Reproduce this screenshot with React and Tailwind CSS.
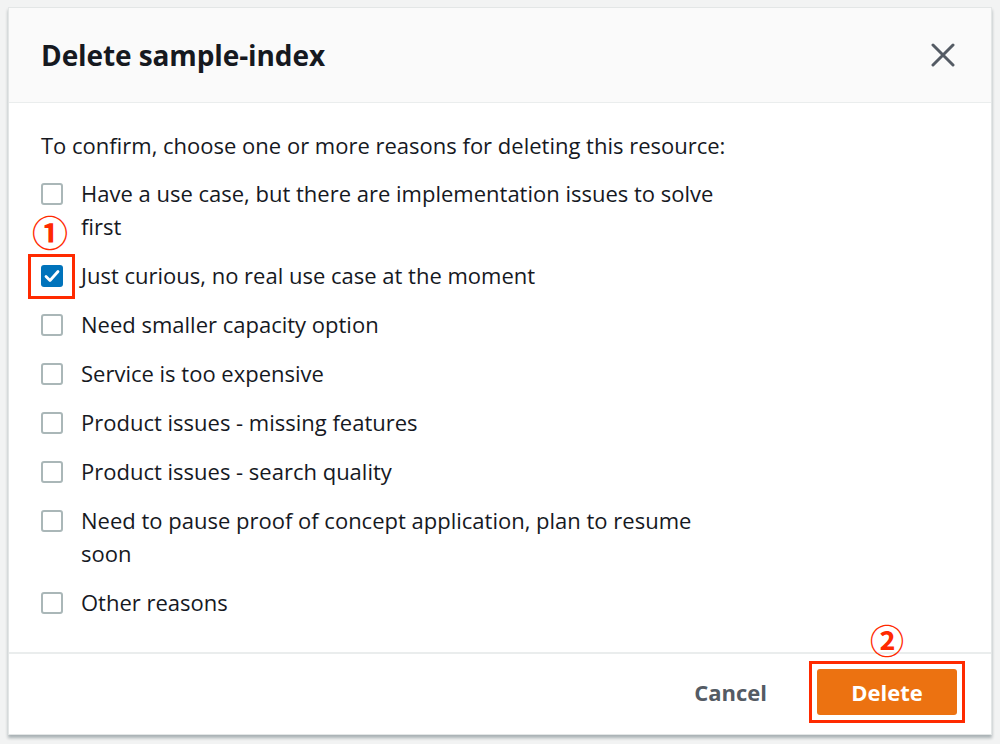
export default function App() {
  const reasons = [
    { text: "Have a use case, but there are implementation issues to solve first", checked: false },
    { text: "Just curious, no real use case at the moment", checked: true },
    { text: "Need smaller capacity option", checked: false },
    { text: "Service is too expensive", checked: false },
    { text: "Product issues - missing features", checked: false },
    { text: "Product issues - search quality", checked: false },
    { text: "Need to pause proof of concept application, plan to resume soon", checked: false },
    { text: "Other reasons", checked: false },
  ];
  return (
    <div
      className="w-[1000px] h-[744px] bg-[#f2f3f3] pt-[7px] pl-[8px] overflow-hidden"
      style={{ fontFamily: '"Open Sans", "Noto Sans", sans-serif' }}
    >
      <div className="w-[984px] h-[728px] bg-white flex flex-col border border-[#e3e6e6] shadow-[0_3px_3px_rgba(0,28,36,0.3)]">
        <div className="h-[95px] shrink-0 bg-[#fafafa] border-b border-[#eaeded] flex items-center justify-between pl-[32px] pr-[36px]">
          <h1 className="text-[28px] font-bold text-[#16191f] tracking-[-0.1px]">Delete sample-index</h1>
          <svg width="24" height="24" viewBox="0 0 24 24" className="text-[#545b64]">
            <path d="M2 2 L22 22 M22 2 L2 22" stroke="currentColor" strokeWidth="3" strokeLinecap="round" />
          </svg>
        </div>
        <div className="flex-1 pl-[32px] pt-[26px] text-[#16191f] text-[22px] leading-[33px]">
          <p className="mb-[15px]">To confirm, choose one or more reasons for deleting this resource:</p>
          <div className="flex flex-col gap-[16px]">
            {reasons.map((r, i) => (
              <div key={i} className="flex items-start relative">
                <div className="h-[33px] flex items-center shrink-0 relative">
                  {r.checked ? (
                    <div className="w-[22px] h-[22px] rounded-[3px] bg-[#0073bb] flex items-center justify-center">
                      <svg width="16" height="14" viewBox="0 0 16 14">
                        <path d="M2 7.5 L6 11.5 L14 2.5" fill="none" stroke="white" strokeWidth="2.8" strokeLinecap="round" strokeLinejoin="round" />
                      </svg>
                    </div>
                  ) : (
                    <div className="w-[22px] h-[22px] rounded-[3px] border-2 border-[#aab7b8] bg-white" />
                  )}
                  {r.checked && (
                    <div className="absolute left-[-13px] top-[-5px] w-[47px] h-[45px] border-[3px] border-[#ff2a00]" />
                  )}
                  {r.checked && (
                    <div className="absolute left-[-9px] top-[-48px] text-[#ff2a00] text-[36px] leading-[40px] font-bold" style={{ fontFamily: '"Noto Sans CJK JP", sans-serif' }}>①</div>
                  )}
                </div>
                <span className="ml-[18px] w-[650px]">{r.text}</span>
              </div>
            ))}
          </div>
        </div>
        <div className="h-[82px] shrink-0 border-t-2 border-[#eaeded] flex items-center justify-end pr-[26px] pb-[4px]">
          <button className="text-[22px] font-bold text-[#545b64] mr-[42px]">Cancel</button>
          <div className="relative border-[3px] border-[#ff2a00] p-[5px]">
            <div className="absolute left-1/2 -translate-x-1/2 top-[-44px] text-[#ff2a00] text-[34px] leading-[40px] font-bold" style={{ fontFamily: '"Noto Sans CJK JP", sans-serif' }}>②</div>
            <button className="w-[140px] h-[46px] rounded-[3px] bg-[#ec7211] text-white text-[22px] font-bold flex items-center justify-center">Delete</button>
          </div>
        </div>
      </div>
    </div>
  );
}
